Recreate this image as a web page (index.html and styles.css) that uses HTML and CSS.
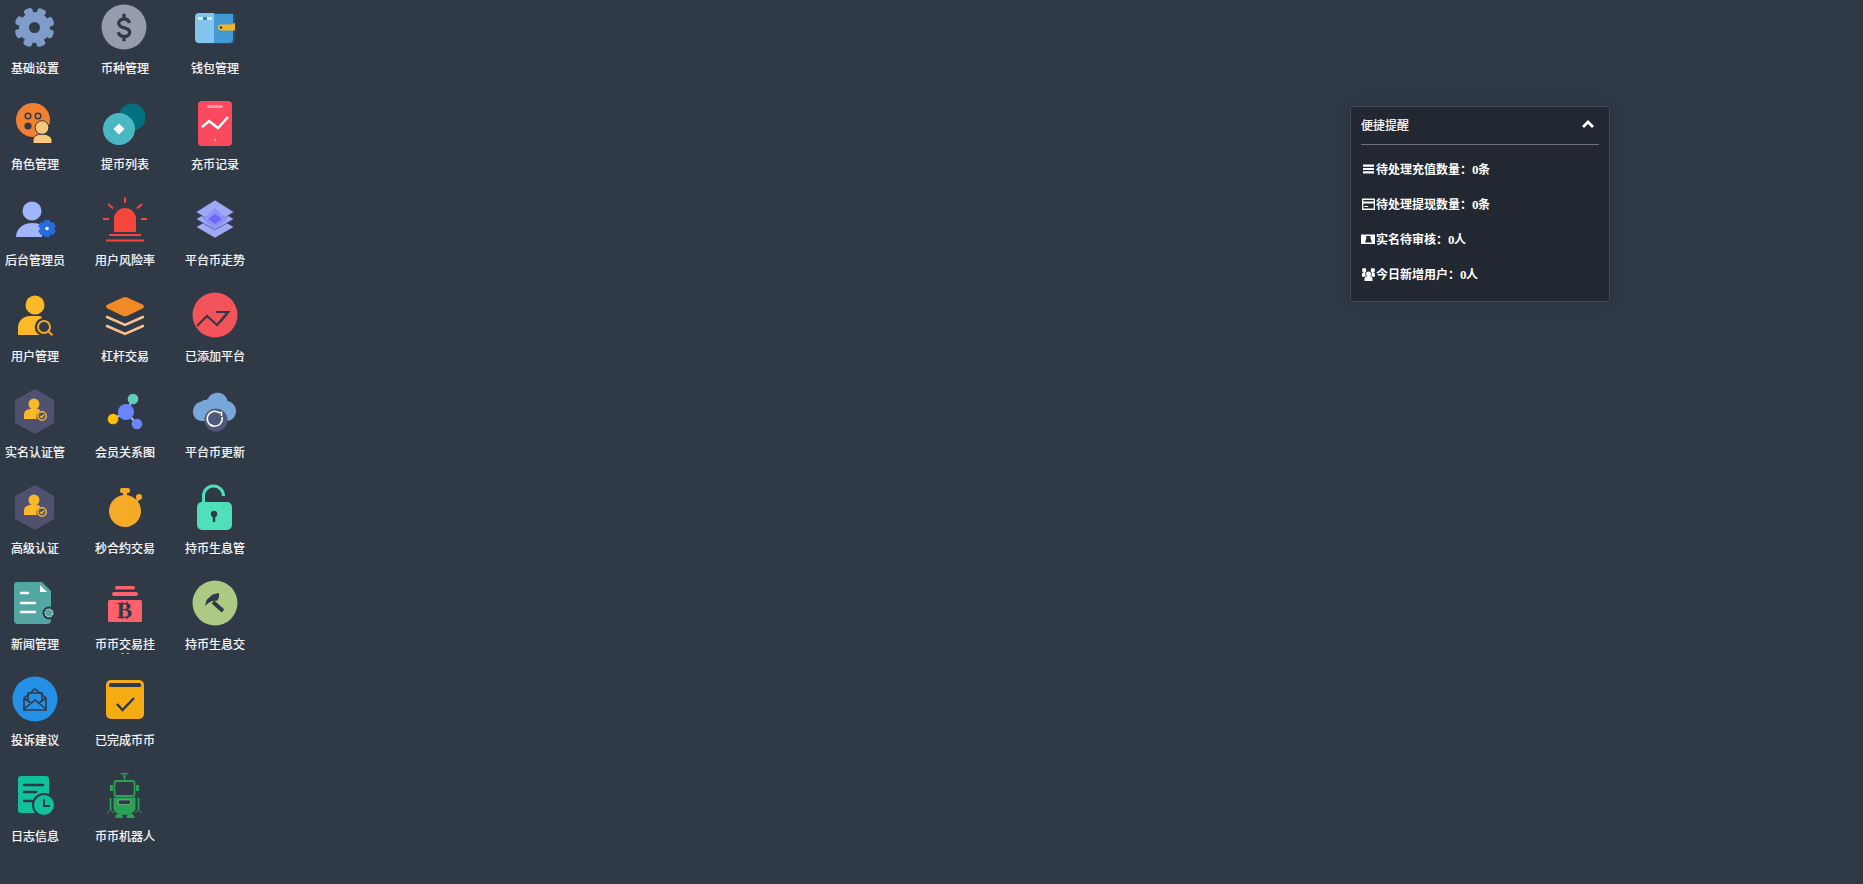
FILE: index.html
```html
<!DOCTYPE html>
<html lang="zh-CN">
<head>
    <meta charset="UTF-8">
    <title>后台首页</title>
    <link rel="stylesheet" href="styles.css">
</head>
<body>
<div class="desktop">
    <div class="app">
        <svg class="app-icon" viewBox="0 0 48 48"><circle cx="23.500" cy="24.500" r="15.500" fill="#7f9cca"/><circle cx="23.500" cy="24.500" r="17" fill="none" stroke="#7f9cca" stroke-width="6" stroke-linecap="round" stroke-dasharray="3 10.350" transform="rotate(17.600 23.500 24.500)"/><circle cx="23.500" cy="24.500" r="5.500" fill="#303a47"/></svg>
        <div class="app-name">基础设置</div>
    </div>
    <div class="app">
        <svg class="app-icon" viewBox="0 0 48 48"><circle cx="22" cy="21" r="17" fill="#f28030"/><circle cx="17" cy="17" r="2.800" fill="none" stroke="#2f3947" stroke-width="1.500"/><circle cx="27" cy="17" r="2.800" fill="none" stroke="#2f3947" stroke-width="1.500"/><circle cx="17" cy="27" r="3.600" fill="#2f3947"/><path fill="#fbc77c" stroke="#2f3947" d="M22 44.500v-3c0-4 4-6.500 9-6.500s10 2.500 10 6.500v3z"/><circle cx="31" cy="28.500" r="6.800" fill="#fbc77c" stroke="#2f3947"/></svg>
        <div class="app-name">角色管理</div>
    </div>
    <div class="app">
        <svg class="app-icon" viewBox="0 0 48 48"><circle cx="21" cy="16" r="9.500" fill="#a0b5fb"/><path fill="#a0b5fb" d="M5 42c0-8 7-14 16-14 5 0 8 .8 12 3l-2 11z"/><path fill="#2a6ae0" d="M33.500 25h5l1 2.800 2.800-.8 2.500 4.200-2 2.300 2 2.300-2.500 4.200-2.800-.8-1 2.800h-5l-1-2.800-2.800.8-2.500-4.200 2-2.300-2-2.300 2.500-4.200 2.800.8z"/><circle cx="36" cy="33.500" r="1.800" fill="#fff"/></svg>
        <div class="app-name">后台管理员</div>
    </div>
    <div class="app">
        <svg class="app-icon" viewBox="0 0 48 48"><circle cx="24" cy="14" r="9.500" fill="#fdb927"/><path fill="#fdb927" d="M7 44v-7c0-7 5-12 12-12h8c4 0 5 2 3 4-5 4-5 10-1 15z"/><circle cx="33" cy="36" r="7" fill="none" stroke="#2f3947" stroke-width="4.500"/><circle cx="33" cy="36" r="6" fill="#2f3947" stroke="#f5a623" stroke-width="2"/><path stroke="#f5a623" stroke-width="2" d="M37.500 40.500l4 3.800"/></svg>
        <div class="app-name">用户管理</div>
    </div>
    <div class="app">
        <svg class="app-icon" viewBox="0 0 48 48"><path fill="#50506f" d="M24 2l19 11v23L24 47 4 36V13z"/><circle cx="23" cy="17" r="5.500" fill="#fbb827"/><path fill="#fbb827" d="M13 32v-4c0-4 3-6 7-6h6c3 0 4 2 2 3-3 2-3 5-2 7z"/><circle cx="31" cy="29" r="4.200" fill="#50506f" stroke="#f5b727" stroke-width="1.500"/><path fill="none" stroke="#f5b727" stroke-width="1.300" d="M29 29l1.500 1.500 2.500-3"/></svg>
        <div class="app-name">实名认证管</div>
    </div>
    <div class="app">
        <svg class="app-icon" viewBox="0 0 48 48"><path fill="#50506f" d="M24 2l19 11v23L24 47 4 36V13z"/><circle cx="23" cy="17" r="5.500" fill="#fbb827"/><path fill="#fbb827" d="M13 32v-4c0-4 3-6 7-6h6c3 0 4 2 2 3-3 2-3 5-2 7z"/><circle cx="31" cy="29" r="4.200" fill="#50506f" stroke="#f5b727" stroke-width="1.500"/><path fill="none" stroke="#f5b727" stroke-width="1.300" d="M29 29l1.500 1.500 2.500-3"/></svg>
        <div class="app-name">高级认证</div>
    </div>
    <div class="app">
        <svg class="app-icon" viewBox="0 0 48 48"><path fill="#53a7a3" d="M6 3h25l9 9v29a4 4 0 0 1-4 4H7a4 4 0 0 1-4-4V6a3 3 0 0 1 3-3z"/><path fill="#fff" d="M29 6l7 7h-7z"/><path stroke="#fff" stroke-width="2.500" stroke-linecap="round" d="M10 14h7M10 24h14M10 33h14"/><circle cx="38" cy="34" r="6.500" fill="#2f3947"/><circle cx="38" cy="34" r="4" fill="#53a7a3" stroke="#d7ece9" stroke-width="1" stroke-dasharray="2 1"/></svg>
        <div class="app-name">新闻管理</div>
    </div>
    <div class="app">
        <svg class="app-icon" viewBox="0 0 48 48"><circle cx="24" cy="24" r="22.500" fill="#2491e6"/><path fill="none" stroke="#2f3947" stroke-width="1.600" d="M13 23l11-9 11 9v12H13zM17 26V18h14v8M13 34l11-9 11 9M13 23l7 5M35 23l-7 5"/></svg>
        <div class="app-name">投诉建议</div>
    </div>
    <div class="app">
        <svg class="app-icon" viewBox="0 0 48 48"><rect x="7" y="5" width="31" height="37" rx="3" fill="#11c19d"/><path stroke="#2f3947" stroke-width="2.500" stroke-linecap="round" d="M13 14h19M13 21h12M13 30h8"/><circle cx="33" cy="34" r="11" fill="#11c19d" stroke="#2f3947" stroke-width="2"/><path fill="none" stroke="#2f3947" stroke-width="2" d="M33 28v7h6"/></svg>
        <div class="app-name">日志信息</div>
    </div>

    <div class="app">
        <svg class="app-icon" viewBox="0 0 48 48"><circle cx="23" cy="24" r="22.500" fill="#949cae"/><path fill="none" stroke="#2f3947" stroke-width="3.300" d="M28.500 20c-.7-2.500-2.700-4-5.500-4-3.200 0-5.300 1.800-5.300 4.200 0 6.300 11 3 11 9 0 2.600-2.400 4.300-5.700 4.300-3 0-5-1.600-5.700-4.200M23 10.700V16M23 33v5.300"/></svg>
        <div class="app-name">币种管理</div>
    </div>
    <div class="app">
        <svg class="app-icon" viewBox="0 0 48 48"><circle cx="31" cy="18" r="13.500" fill="#04707f"/><circle cx="18" cy="30" r="16" fill="#4ab8c1"/><path fill="#fff" d="M18 24.500l5.500 5.500-5.500 5.500-5.500-5.500z"/></svg>
        <div class="app-name">提币列表</div>
    </div>
    <div class="app">
        <svg class="app-icon" viewBox="0 0 48 48"><path fill="#f4463c" d="M13 37V24a11 11 0 0 1 22 0v13z"/><path fill="none" stroke="#f4463c" stroke-width="2.200" d="M8 40h32M5 45.500h38"/><path fill="none" stroke="#f4463c" stroke-width="2" d="M24 2.500v5.500M7 9l5 4.500M41 9l-5 4.500M2 24h6M40 24h6"/></svg>
        <div class="app-name">用户风险率</div>
    </div>
    <div class="app">
        <svg class="app-icon" viewBox="0 0 48 48"><path fill="#f08a24" d="M22 6.500a5 5 0 0 1 4 0l15.500 7c2 1 2 3 0 4L26 25a5 5 0 0 1-4 0L6.500 17.500c-2-1-2-3 0-4z"/><path fill="none" stroke="#fcc08e" stroke-width="2.500" stroke-linecap="round" d="M6 26l18 8 18-8M6 35l18 8 18-8"/></svg>
        <div class="app-name">杠杆交易</div>
    </div>
    <div class="app">
        <svg class="app-icon" viewBox="0 0 48 48"><path stroke="#a9b7f5" stroke-width="2" d="M25 25L32 12M25 25L12 32M25 25l11 12"/><circle cx="32" cy="12" r="5.300" fill="#62cdbf"/><circle cx="25" cy="25" r="8" fill="#6a85fc"/><circle cx="12" cy="32" r="5.300" fill="#fdc000"/><circle cx="36" cy="37" r="5.300" fill="#6a85fc"/></svg>
        <div class="app-name">会员关系图</div>
    </div>
    <div class="app">
        <svg class="app-icon" viewBox="0 0 48 48"><circle cx="24" cy="28" r="16" fill="#f5aa28"/><rect x="19" y="5" width="10" height="5" rx="2" fill="#f5aa28"/><rect x="22" y="9" width="4" height="5" fill="#f5aa28"/><circle cx="38" cy="14" r="3" fill="#f5aa28"/><path stroke="#f5aa28" stroke-width="2.500" d="M35 19l3-4"/></svg>
        <div class="app-name">秒合约交易</div>
    </div>
    <div class="app">
        <svg class="app-icon" viewBox="0 0 48 48"><rect x="14" y="7" width="20" height="3.500" rx="1.700" fill="#fd616c"/><rect x="11" y="13" width="26" height="4" rx="2" fill="#fd616c"/><rect x="7" y="21" width="34" height="22" rx="1.500" fill="#fd616c"/><text class="coin-letter" x="23.500" y="38.500">B</text><path stroke="#2f3947" stroke-width="1.200" d="M21 22.500v2M26 22.500v2M21 38v2M26 38v2"/></svg>
        <div class="app-name">币币交易挂单</div>
    </div>
    <div class="app">
        <svg class="app-icon" viewBox="0 0 48 48"><rect x="5" y="5" width="38" height="39" rx="5" fill="#f5ac12"/><rect x="8" y="8" width="32" height="4" rx="1.500" fill="#2f3947"/><path fill="none" stroke="#2f3947" stroke-width="2.400" d="M16 29l5.500 6L33 23"/></svg>
        <div class="app-name">已完成币币</div>
    </div>
    <div class="app">
        <svg class="app-icon" viewBox="0 0 48 48"><g fill="none" stroke="#2aa155"><rect x="13.500" y="10" width="20" height="15" rx="2" stroke-width="1.800"/><path stroke-width="1.200" d="M23.500 9V5M19.500 3.500c2-1.500 6-1.500 8 0"/><path stroke-width="1.800" d="M9.500 27v12M37.500 27v12"/><path stroke-width="1" d="M6 42l3.500-3 3.500 3M34 42l3.500-3 3.500 3"/></g><circle cx="23.500" cy="5" r="1.400" fill="#2aa155"/><path fill="#2aa155" d="M9 14h3v6H9zM35 14h3v6h-3z"/><path fill="#2aa155" d="M12.500 26.500h22V37c0 4-5 7-11 7s-11-3-11-7z"/><rect x="17.500" y="29" width="12" height="4.500" fill="#2f3947" stroke="#8fc9a3" stroke-width=".6"/><path fill="#2aa155" d="M14 47c0-3 2-4.500 4-4.500s4 1.500 4 4.500zM25.500 47c0-3 2-4.500 4-4.500s4 1.500 4 4.500z"/></svg>
        <div class="app-name">币币机器人</div>
    </div>

    <div class="app">
        <svg class="app-icon" viewBox="0 0 48 48"><rect x="5" y="10" width="39" height="31" rx="4" fill="#2c4a7a"/><path fill="#449bd3" d="M23 11h19v25a4 4 0 0 1-4 4H23z"/><path fill="#84c5f0" d="M8 10h15v30H8a4 4 0 0 1-4-4V14a4 4 0 0 1 4-4z"/><path fill="#d8eefb" d="M7 14h5v3H7zM16 14h5v3h-5z"/><path fill="#2f7fb8" d="M12 14h4v3h-4z"/><path fill="#f5b323" d="M30 21.500h10l4-1.500v7.500H30a3 3 0 0 1 0-6z"/><circle cx="30" cy="24.500" r="1.300" fill="#2f3947"/></svg>
        <div class="app-name">钱包管理</div>
    </div>
    <div class="app">
        <svg class="app-icon" viewBox="0 0 48 48"><rect x="7" y="2" width="34" height="45" rx="4" fill="#fb4a5d"/><rect x="16" y="6" width="16" height="3" rx="1.500" fill="#fc9aa0"/><path fill="none" stroke="#fff" stroke-width="2.500" d="M11 28l7-6 9 7 10-11"/><circle cx="24" cy="41" r="1.200" fill="#fc9aa0"/></svg>
        <div class="app-name">充币记录</div>
    </div>
    <div class="app">
        <svg class="app-icon" viewBox="0 0 48 48"><path fill="#a0a8f8" stroke="#2f3947" stroke-width=".6" d="M24 21l19 11-19 11L5 32z"/><path fill="#a0a8f8" stroke="#2f3947" stroke-width=".6" d="M24 13l19 11-19 11L5 24z"/><path fill="#a0a8f8" stroke="#2f3947" stroke-width=".6" d="M24 5l19 12-19 12L5 17z"/><path fill="#8b93f6" d="M24 13l12 11-12 11-12-11z"/><path fill="#6a66ff" d="M24 19l7 5-7 5-7-5z"/></svg>
        <div class="app-name">平台币走势</div>
    </div>
    <div class="app">
        <svg class="app-icon" viewBox="0 0 48 48"><circle cx="24" cy="24" r="22.500" fill="#f25459"/><path fill="none" stroke="#2f3947" stroke-width="2" d="M6 35l10-10 10 9 11-13M25 21h12.500l-8 10"/></svg>
        <div class="app-name">已添加平台</div>
    </div>
    <div class="app">
        <svg class="app-icon" viewBox="0 0 48 48"><path fill="#77a6d8" d="M13 13a6 6 0 0 1 4-1c2-5 7-7 12-6 4 1 7 4 7.500 8 5 1 8.500 5 8.500 10 0 6-4 10-10 10H11C6 34 2 30 2 25s3-9 7-10z"/><path fill="#2f3947" d="M11 11h5v2h-5z"/><circle cx="25" cy="33" r="11.500" fill="#50597a"/><path fill="none" stroke="#fff" stroke-width="1.500" d="M31 30a7.500 7.500 0 1 1-2.500-4M27 25.500h3.500V29"/></svg>
        <div class="app-name">平台币更新</div>
    </div>
    <div class="app">
        <svg class="app-icon" viewBox="0 0 48 48"><path fill="none" stroke="#4fdfb9" stroke-width="3" d="M12.500 22v-9a10 10 0 0 1 20 0"/><rect x="6" y="19" width="35" height="28" rx="5" fill="#4fdfb9"/><circle cx="23" cy="31" r="3.200" fill="#2f3947"/><path fill="#2f3947" d="M21.800 32h2.400v7h-2.400z"/></svg>
        <div class="app-name">持币生息管</div>
    </div>
    <div class="app">
        <svg class="app-icon" viewBox="0 0 48 48"><circle cx="24" cy="24" r="22.500" fill="#aec984"/><path fill="#2f3947" d="M14 27l1.500-6 6-5.500 6.500-1.500v4l-1.500 3.500-5.500.5-3.500 2z"/><path stroke="#2f3947" stroke-width="4" d="M22 23l10 9"/></svg>
        <div class="app-name">持币生息交</div>
    </div>
</div>

<div class="reminder">
    <div class="reminder-head">
        <span>便捷提醒</span>
        <svg class="chevron" viewBox="0 0 14 10"><path fill="none" stroke="#fff" stroke-width="2.800" d="M2 8l5-5 5 5"/></svg>
    </div>
    <div class="reminder-row">
        <svg class="row-icon" viewBox="0 0 14 14"><path fill="#fff" d="M2 2.500h11v2.200H2zM2 5.900h11v2.200H2zM2 9.300h11v2.200H2z"/></svg>
        <span>待处理充值数量：<span class="count">0</span>条</span>
    </div>
    <div class="reminder-row">
        <svg class="row-icon" viewBox="0 0 14 14"><path fill="#fff" fill-rule="evenodd" d="M1 1.500h13V13H1zM2.300 3v1.500h10.400V3zM2.300 6.500v5h10.400v-5zM3.200 9h4v1h-4z"/></svg>
        <span>待处理提现数量：<span class="count">0</span>条</span>
    </div>
    <div class="reminder-row">
        <svg class="row-icon" viewBox="0 0 14 14"><path fill="#fff" fill-rule="evenodd" d="M0 2.500h14V12H0zM5 4h4.500v2l1.500 4.500H4L5.500 6z"/></svg>
        <span>实名待审核：<span class="count">0</span>人</span>
    </div>
    <div class="reminder-row">
        <svg class="row-icon" viewBox="0 0 14 14"><path fill="#fff" d="M7.500 4.500a2.500 2.500 0 1 1 0 5 2.500 2.500 0 0 1 0-5zM3.200 1a2 2 0 1 1 0 4.400 2 2 0 0 1 0-4.400zM11.800 1a2 2 0 1 1 0 4.400 2 2 0 0 1 0-4.400zM3.500 14v-2.500c0-1.500 1.500-2.500 4-2.500s4 1 4 2.500V14zM1 9.500V7c0-1.200 1.500-1.700 3.500-1.400-.5 1.400-.2 2.600.5 3.400-1.200.2-1.700.5-2 1zM14 9.500V7c0-1.200-1.500-1.700-3.500-1.400.5 1.400.2 2.600-.5 3.400 1.200.2 1.700.5 2 1z"/></svg>
        <span>今日新增用户：<span class="count">0</span>人</span>
    </div>
</div>
</body>
</html>
```

FILE: styles.css
```css
html, body {
    height: 100%;
}
body {
    margin: 0;
    background-color: #303a47;
    color: #fff;
    font-family: "Noto Sans CJK SC", "Liberation Sans", sans-serif;
    font-size: 12px;
    overflow: hidden;
}
.desktop {
    display: grid;
    grid-template-rows: repeat(9, 96px);
    grid-auto-flow: column;
    grid-auto-columns: 70px;
    column-gap: 20px;
    justify-content: start;
}
.app {
    display: flex;
    flex-direction: column;
    align-items: center;
    padding-top: 3px;
    box-sizing: border-box;
}
.app-icon {
    width: 48px;
    height: 48px;
    flex: none;
}
.app-name {
    width: 60px;
    height: 18px;
    margin-top: 9px;
    line-height: 15px;
    text-align: center;
    overflow: hidden;
    -webkit-text-stroke: 0.2px #fff;
}
.coin-letter {
    fill: #2f3947;
    font-family: "Liberation Serif", serif;
    font-weight: bold;
    font-size: 23px;
    text-anchor: middle;
}
.reminder {
    position: absolute;
    left: 1350px;
    top: 106px;
    width: 260px;
    height: 196px;
    box-sizing: border-box;
    padding: 0 10px;
    background-color: #222831;
    border: 1px solid #434a56;
    border-radius: 2px;
    box-shadow: 0 0 24px rgba(0, 0, 0, 0.2);
}
.reminder-head {
    display: flex;
    justify-content: space-between;
    align-items: center;
    height: 38px;
    border-bottom: 1px solid #6b707a;
    margin-bottom: 7px;
    padding-bottom: 3px;
    box-sizing: border-box;
    -webkit-text-stroke: 0.2px #fff;
}
.chevron {
    width: 14px;
    height: 10px;
    margin-right: 4px;
}
.reminder-row {
    display: flex;
    align-items: center;
    gap: 1px;
    height: 35px;
    padding-bottom: 2px;
    box-sizing: border-box;
    font-family: "Liberation Serif", "Noto Sans CJK SC", serif;
    font-size: 12px;
    font-weight: bold;
}
.row-icon {
    width: 14px;
    height: 14px;
    flex: none;
}
.count {
    font-size: 13px;
    letter-spacing: -0.5px;
}
```
